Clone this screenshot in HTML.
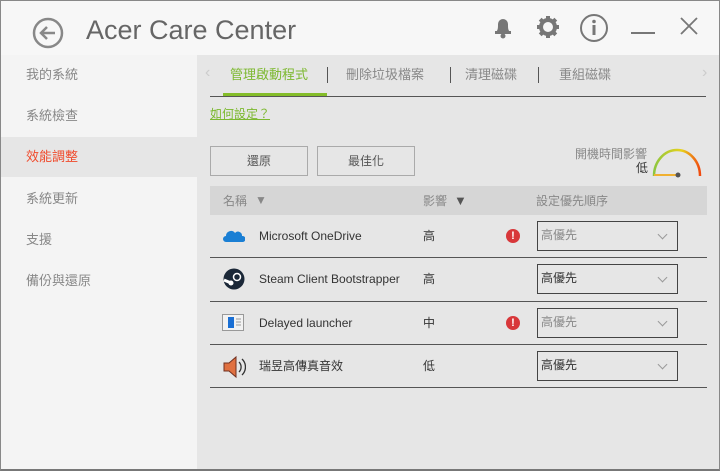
<!DOCTYPE html>
<html><head><meta charset="utf-8"><style>
*{margin:0;padding:0;box-sizing:border-box}
body{width:720px;height:471px;overflow:hidden;background:#f4f4f4;font-family:"Liberation Sans","Noto Sans CJK TC",sans-serif;position:relative;line-height:1.2}
.win{position:absolute;left:0;top:0;width:720px;height:471px;border:1px solid #888;border-bottom:2px solid #777;}
.title{position:absolute;left:0;top:0;width:720px;height:55px;background:#f7f7f7}
.t{position:absolute;left:86px;top:14px;font-size:27px;color:#666;}
.side{position:absolute;left:0;top:55px;width:197px;height:414px;background:#f4f4f4}
.si{position:absolute;left:26px;font-size:13px;color:#888}
.main{position:absolute;left:197px;top:55px;width:522px;height:414px;background:#e6e6e6}
.a{position:absolute}
.tab{position:absolute;top:12px;font-size:13px;color:#888}
.btn{position:absolute;top:91px;height:30px;border:1px solid #aaa;font-size:12px;color:#555;text-align:center;line-height:28px}
.hdr{position:absolute;left:13px;top:131px;width:497px;height:29px;background:#d6d6d6;font-size:12px;color:#888}
.row{position:absolute;left:13px;width:497px;height:43.3px;border-bottom:1.5px solid #555;font-size:12px;color:#333}
.row>span{top:14px}
.dd{position:absolute;left:327px;top:6px;width:141px;height:30px;border:1.5px solid #444;font-size:12px;color:#333;padding:6px 0 0 3px}
.dd::after{content:"";position:absolute;right:11px;top:9px;width:6px;height:6px;border-right:1.3px solid #999;border-bottom:1.3px solid #999;transform:rotate(45deg)}
.warn{position:absolute;left:296px;top:14px;width:14px;height:14px;border-radius:50%;background:#d8373a;color:#fff;font-size:11px;font-weight:bold;text-align:center;line-height:14px}
</style></head><body>
<div class="title">
<svg class="a" style="left:32px;top:17px" width="32" height="32"><circle cx="16" cy="16" r="14" fill="none" stroke="#888" stroke-width="2.5"/><path d="M23 16H10M15 10l-6 6 6 6" fill="none" stroke="#888" stroke-width="2.5"/></svg>
<div class="t">Acer Care Center</div>
<svg class="a" style="left:492px;top:14px" width="22" height="26"><path d="M4 18c2-2 2-4 2-8a5 5 0 0 1 10 0c0 4 0 6 2 8z" fill="#777"/><rect x="3" y="17" width="16" height="3" fill="#777"/><circle cx="11" cy="22" r="2.5" fill="#777"/></svg>
<svg class="a" style="left:536px;top:15px" width="24" height="24"><circle cx="12" cy="12" r="7" fill="none" stroke="#777" stroke-width="4"/><g stroke="#777" stroke-width="4"><path d="M12 1v4M12 19v4M1 12h4M19 12h4M4.2 4.2l2.8 2.8M17 17l2.8 2.8M4.2 19.8l2.8-2.8M17 7l2.8-2.8"/></g></svg>
<svg class="a" style="left:579px;top:13px" width="30" height="30"><circle cx="15" cy="15" r="13" fill="none" stroke="#777" stroke-width="2"/><rect x="13.5" y="12" width="3" height="10" fill="#777"/><circle cx="15" cy="8.5" r="1.8" fill="#777"/></svg>
<div class="a" style="left:631px;top:32px;width:24px;height:2px;background:#777"></div>
<svg class="a" style="left:679px;top:16px" width="20" height="20"><path d="M2 2l16 16M18 2L2 18" stroke="#777" stroke-width="1.8"/></svg>
</div>
<div class="side">
<div class="si" style="top:12px">我的系統</div>
<div class="si" style="top:53px">系統檢查</div>
<div class="a" style="left:0;top:82px;width:197px;height:40px;background:#e6e6e6"></div>
<div class="si" style="top:94px;color:#f04a2c">效能調整</div>
<div class="si" style="top:136px">系統更新</div>
<div class="si" style="top:177px">支援</div>
<div class="si" style="top:218px">備份與還原</div>
</div>
<div class="main">
<div class="a" style="left:8px;top:8px;color:#ccc;font-size:16px">‹</div>
<div class="a" style="left:505px;top:8px;color:#ccc;font-size:16px">›</div>
<div class="tab" style="left:33px;color:#7cb82f">管理啟動程式</div>
<div class="a" style="left:26px;top:38px;width:104px;height:3px;background:#84bd29"></div>
<div class="a" style="left:130px;top:12px;width:1px;height:16px;background:#555"></div>
<div class="tab" style="left:149px">刪除垃圾檔案</div>
<div class="a" style="left:253px;top:12px;width:1px;height:16px;background:#555"></div>
<div class="tab" style="left:268px">清理磁碟</div>
<div class="a" style="left:341px;top:12px;width:1px;height:16px;background:#555"></div>
<div class="tab" style="left:362px">重組磁碟</div>
<div class="a" style="left:13px;top:41px;width:496px;height:1px;background:#555"></div>
<div class="a" style="left:13px;top:52px;font-size:12px;color:#7cb82f;text-decoration:underline">如何設定？</div>
<div class="btn" style="left:13px;width:98px">還原</div>
<div class="btn" style="left:120px;width:98px">最佳化</div>
<div class="a" style="left:378px;top:92px;font-size:12px;color:#888">開機時間影響</div>
<div class="a" style="left:439px;top:106px;font-size:12px;color:#333">低</div>
<svg class="a" style="left:454px;top:90px" width="52" height="36"><defs><linearGradient id="g" x1="0" x2="1"><stop offset="0" stop-color="#8cc63f"/><stop offset=".6" stop-color="#e8d21c"/><stop offset="1" stop-color="#f04a10"/></linearGradient></defs><path d="M3 31A23 26 0 0 1 49 31" fill="none" stroke="url(#g)" stroke-width="2.5"/><path d="M3 30H26" stroke="#f0b030" stroke-width="2"/><circle cx="27" cy="30" r="2.5" fill="#555"/></svg>
<div class="hdr"><span class="a" style="left:13px;top:8px">名稱</span><span class="a" style="left:45px;top:7px;font-size:12px;color:#888">▼</span><span class="a" style="left:213px;top:8px">影響</span><span class="a" style="left:244px;top:7px;font-size:13px;color:#555">▼</span><span class="a" style="left:326px;top:8px">設定優先順序</span></div>
<div class="row" style="top:160px">
<svg class="a" style="left:13px;top:14px" width="22" height="14"><path d="M3 13a3 3 0 0 1 0-6 5 5 0 0 1 9-3 4 4 0 0 1 7 3 3 3 0 0 1 1 6z" fill="#1a7fd4"/></svg>
<span class="a" style="left:49px">Microsoft OneDrive</span><span class="a" style="left:213px">高</span><div class="warn">!</div><div class="dd" style="color:#888">高優先</div></div>
<div class="row" style="top:203.3px">
<svg class="a" style="left:13px;top:10px" width="22" height="22"><circle cx="11" cy="11" r="10.5" fill="#1b2838"/><circle cx="14" cy="9" r="3.5" fill="none" stroke="#fff" stroke-width="1.5"/><path d="M1 12l7 3" stroke="#fff" stroke-width="3"/><circle cx="8" cy="15" r="2.5" fill="#fff"/></svg>
<span class="a" style="left:49px">Steam Client Bootstrapper</span><span class="a" style="left:213px">高</span><div class="dd">高優先</div></div>
<div class="row" style="top:246.6px">
<svg class="a" style="left:12px;top:12px" width="22" height="18"><rect x=".5" y=".5" width="21" height="16" fill="#f2f2f2" stroke="#999"/><rect x="6" y="3" width="6" height="11" fill="#1a6fd4"/><path d="M14 5h5M14 8h5M14 11h5" stroke="#999"/></svg>
<span class="a" style="left:49px">Delayed launcher</span><span class="a" style="left:213px">中</span><div class="warn">!</div><div class="dd" style="color:#888">高優先</div></div>
<div class="row" style="top:289.9px">
<svg class="a" style="left:12px;top:10px" width="24" height="24"><path d="M2 8h5l7-6v20l-7-6H2z" fill="#e07040" stroke="#703020"/><path d="M17 7a7 7 0 0 1 0 10M20 4a11 11 0 0 1 0 16" fill="none" stroke="#333" stroke-width="1.3"/></svg>
<span class="a" style="left:49px">瑞昱高傳真音效</span><span class="a" style="left:213px">低</span><div class="dd">高優先</div></div>
</div>
<div class="win"></div>
</body></html>
